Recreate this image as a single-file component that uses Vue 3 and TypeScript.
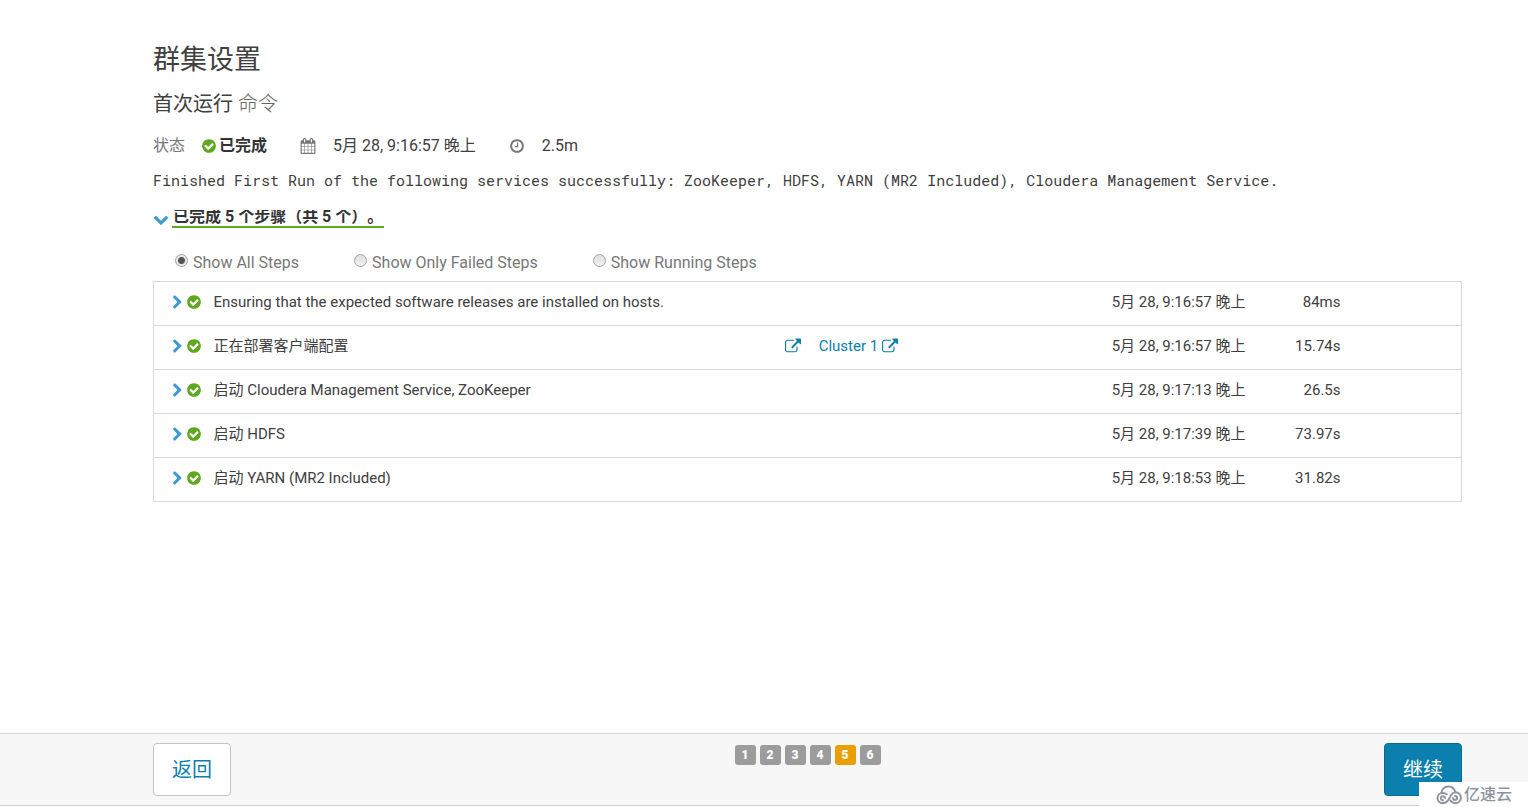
<script setup lang="ts">
import { ref } from 'vue'

interface Step {
  name: string
  cluster?: string
  started: string
  duration: string
}

const icons = {
  check: 'M1412 734q0-28-18-46l-91-90q-19-19-45-19t-45 19l-408 407-226-226q-19-19-45-19t-45 19l-91 90q-18 18-18 46 0 27 18 45l362 362q19 19 45 19 27 0 46-19l543-543q18-18 18-45zm252 162q0 209-103 385.5t-279.5 279.5-385.5 103-385.5-103-279.5-279.5-103-385.5 103-385.5 279.5-279.5 385.5-103 385.5 103 279.5 279.5 103 385.5z',
  external: 'M1472 992v320q0 119-84.5 203.5t-203.5 84.5h-832q-119 0-203.5-84.5t-84.5-203.5v-832q0-119 84.5-203.5t203.5-84.5h704q14 0 23 9t9 23v64q0 14-9 23t-23 9h-704q-66 0-113 47t-47 113v832q0 66 47 113t113 47h832q66 0 113-47t47-113v-320q0-14 9-23t23-9h64q14 0 23 9t9 23zm384-864v512q0 26-19 45t-45 19-45-19l-176-176-652 652q-10 10-23 10t-23-10l-114-114q-10-10-10-23t10-23l652-652-176-176q-19-19-19-45t19-45 45-19h512q26 0 45 19t19 45z',
  right: 'M1363 877l-742 742q-19 19-45 19t-45-19l-166-166q-19-19-19-45t19-45l531-531-531-531q-19-19-19-45t19-45l166-166q19-19 45-19t45 19l742 742q19 19 19 45t-19 45z',
  down: 'M1683 808l-742 741q-19 19-45 19t-45-19l-742-741q-19-19-19-45.5t19-45.5l166-165q19-19 45-19t45 19l531 531 531-531q19-19 45-19t45 19l166 165q19 19 19 45.5t-19 45.5z',
  clock: 'M1024 544v448q0 14-9 23t-23 9h-320q-14 0-23-9t-9-23v-64q0-14 9-23t23-9h224v-352q0-14 9-23t23-9h64q14 0 23 9t9 23zm416 352q0-148-73-273t-198-198-273-73-273 73-198 198-73 273 73 273 198 198 273 73 273-73 198-198 73-273zm224 0q0 209-103 385.5t-279.5 279.5-385.5 103-385.5-103-279.5-279.5-103-385.5 103-385.5 279.5-279.5 385.5-103 385.5 103 279.5 279.5 103 385.5z',
  calendar: 'M192 1664h288v-288h-288v288zm352 0h320v-288h-320v288zm-352-352h288v-320h-288v320zm352 0h320v-320h-320v320zm-352-384h288v-288h-288v288zm736 736h320v-288h-320v288zm-384-736h320v-288h-320v288zm768 736h288v-288h-288v288zm-384-352h320v-320h-320v320zm-352-864v-288q0-13-9.5-22.5t-22.5-9.5h-64q-13 0-22.5 9.5t-9.5 22.5v288q0 13 9.5 22.5t22.5 9.5h64q13 0 22.5-9.5t9.5-22.5zm736 864h288v-320h-288v320zm-384-384h320v-288h-320v288zm384 0h288v-288h-288v288zm32-480v-288q0-13-9.5-22.5t-22.5-9.5h-64q-13 0-22.5 9.5t-9.5 22.5v288q0 13 9.5 22.5t22.5 9.5h64q13 0 22.5-9.5t9.5-22.5zm384-64v1280q0 52-38 90t-90 38h-1408q-52 0-90-38t-38-90v-1280q0-52 38-90t90-38h128v-96q0-66 47-113t113-47h64q66 0 113 47t47 113v96h384v-96q0-66 47-113t113-47h64q66 0 113 47t47 113v96h128q52 0 90 38t38 90z',
}

const filters = [
  { value: 'all', label: 'Show All Steps' },
  { value: 'failed', label: 'Show Only Failed Steps' },
  { value: 'running', label: 'Show Running Steps' },
]
const filter = ref('all')

const steps: Step[] = [
  { name: 'Ensuring that the expected software releases are installed on hosts.', started: '5月 28, 9:16:57 晚上', duration: '84ms' },
  { name: '正在部署客户端配置', cluster: 'Cluster 1', started: '5月 28, 9:16:57 晚上', duration: '15.74s' },
  { name: '启动 Cloudera Management Service, ZooKeeper', started: '5月 28, 9:17:13 晚上', duration: '26.5s' },
  { name: '启动 HDFS', started: '5月 28, 9:17:39 晚上', duration: '73.97s' },
  { name: '启动 YARN (MR2 Included)', started: '5月 28, 9:18:53 晚上', duration: '31.82s' },
]

const pages = [1, 2, 3, 4, 5, 6]
const currentPage = 5
</script>

<template>
  <div class="page">
    <main class="content">
      <h1>群集设置</h1>
      <h2>首次运行 <small>命令</small></h2>

      <div class="status">
        <span class="muted">状态</span>
        <span class="done">
          <svg class="icon green" viewBox="0 0 1792 1792"><path :d="icons.check" /></svg>
          <strong>已完成</strong>
        </span>
        <span class="fact">
          <svg class="icon" viewBox="0 0 1792 1792"><path :d="icons.calendar" /></svg>
          <span>5月 28, 9:16:57 晚上</span>
        </span>
        <span class="fact">
          <svg class="icon" viewBox="0 0 1792 1792"><path :d="icons.clock" /></svg>
          <span>2.5m</span>
        </span>
      </div>

      <p class="message">Finished First Run of the following services successfully: ZooKeeper, HDFS, YARN (MR2 Included), Cloudera Management Service.</p>

      <button type="button" class="summary">
        <svg class="icon blue" viewBox="0 0 1792 1792"><path :d="icons.down" /></svg>
        <span>已完成 5 个步骤（共 5 个）。</span>
      </button>

      <div class="filters">
        <label v-for="f in filters" :key="f.value">
          <input v-model="filter" type="radio" name="filter" :value="f.value" />
          <span>{{ f.label }}</span>
        </label>
      </div>

      <table class="steps">
        <colgroup>
          <col class="c-icons" />
          <col class="c-name" />
          <col class="c-link" />
          <col class="c-date" />
          <col class="c-duration" />
          <col class="c-tail" />
        </colgroup>
        <tbody>
          <tr v-for="s in steps" :key="s.name">
            <td>
              <div class="marks">
                <button type="button" class="toggle" :aria-label="s.name">
                  <svg class="icon blue" viewBox="0 0 1792 1792"><path :d="icons.right" /></svg>
                </button>
                <svg class="icon green" viewBox="0 0 1792 1792"><path :d="icons.check" /></svg>
              </div>
            </td>
            <td>{{ s.name }}</td>
            <td>
              <div v-if="s.cluster" class="links">
                <a href="#" aria-label="Command details">
                  <svg class="icon" viewBox="64 0 1792 1792"><path :d="icons.external" /></svg>
                </a>
                <a href="#">
                  <span>{{ s.cluster }}</span>
                  <svg class="icon" viewBox="64 0 1792 1792"><path :d="icons.external" /></svg>
                </a>
              </div>
            </td>
            <td>{{ s.started }}</td>
            <td class="duration">{{ s.duration }}</td>
            <td></td>
          </tr>
        </tbody>
      </table>
    </main>

    <footer class="bar">
      <button type="button" class="btn back">返回</button>
      <ol class="pager">
        <li v-for="p in pages" :key="p" :class="{ active: p === currentPage }">{{ p }}</li>
      </ol>
      <button type="button" class="btn next">继续</button>
    </footer>

    <div class="watermark">
      <svg viewBox="0 0 26 20" fill="none" stroke="#8e959f" stroke-width="2" stroke-linecap="round">
        <path d="M5.500 8.200C5.500 4.300 8.500 1.500 12.300 1.500c3.500 0 6 2 6.900 5.300" />
        <path d="M10.800 9.300C9.700 8.400 8.400 8 6.600 8a5 5 0 0 0 0 10.200c3.700 0 5.400-2.200 6.900-5.200 1.400-2.900 2.700-5.700 6-5.700a5.400 5.400 0 0 1 0 10.900c-2.600 0-4-1.200-5-2.700" />
        <path d="M7 15.200a2 2 0 1 1 2-2.200M19 10.900a2 2 0 1 1-1.900 2.200" />
      </svg>
      <span>亿速云</span>
    </div>
  </div>
</template>

<style>
body {
  margin: 0;
  background: #fff;
}
</style>

<style scoped>
.page {
  position: relative;
  box-sizing: border-box;
  min-height: 100vh;
  padding-bottom: 1px;
  display: flex;
  flex-direction: column;
  font-family: Roboto, "Noto Sans CJK SC", sans-serif;
  font-size: 15px;
  line-height: 20px;
  color: #404040;
}

.content {
  flex: 1;
  padding: 42px 66px 24px 153px;
}

h1,
h2 {
  margin: 0;
  font-weight: 400;
}

h1 {
  font-size: 27px;
  line-height: 36px;
}

h2 {
  margin-top: 12px;
  font-size: 20px;
  line-height: 28px;
}

small {
  font-size: 20px;
  font-weight: 300;
  color: #666;
}

.muted {
  color: #777;
}

.icon {
  flex: none;
  width: 16px;
  height: 16px;
  fill: currentColor;
}

.green {
  color: #60a820;
}

.blue {
  color: #3a9bd0;
}

.status {
  display: flex;
  align-items: center;
  gap: 33px;
  margin-top: 16px;
  font-size: 16px;
  line-height: 24px;
}

.done {
  display: flex;
  align-items: center;
  gap: 2px;
  margin-left: -17px;
}

.done strong {
  color: #333;
}

.fact {
  display: flex;
  align-items: center;
  gap: 17px;
}

.fact .icon {
  color: #777;
}

.message {
  margin: 12px 0 0;
  font-family: "Roboto Mono", "Liberation Mono", monospace;
  font-size: 15px;
  line-height: 20px;
}

.summary {
  display: flex;
  align-items: center;
  gap: 3px;
  margin-top: 20px;
  padding: 0;
  border: 0;
  background: none;
  font-family: inherit;
  font-size: 16px;
  font-weight: 700;
  text-spacing-trim: space-all;
  color: #333;
}

.summary span {
  height: 16px;
  padding: 0 1px;
  border-bottom: 2px solid #60a820;
  line-height: 14px;
  overflow: hidden;
}

.filters {
  display: flex;
  gap: 55px;
  margin-top: 25px;
  padding-left: 22px;
  font-size: 16px;
  line-height: 20px;
  color: #777;
}

.filters label {
  display: flex;
  align-items: flex-start;
  gap: 5px;
}

.filters input {
  appearance: none;
  box-sizing: border-box;
  width: 13px;
  height: 13px;
  margin: 1px 0 0;
  border: 1px solid #a5a5a5;
  border-radius: 50%;
  background: linear-gradient(#dcdcdc, #f3f3f3);
}

.filters input:checked {
  background: radial-gradient(circle, #555 0 3px, #e8e8e8 4px);
}

.steps {
  width: 100%;
  margin-top: 8px;
  border: 1px solid #d8d8d8;
  border-collapse: collapse;
  table-layout: fixed;
}

.steps td {
  height: 44px;
  padding: 0 0 3px;
  border-bottom: 1px solid #d8d8d8;
  box-sizing: border-box;
  vertical-align: middle;
  white-space: nowrap;
}

.c-icons {
  width: 60px;
}

.c-link {
  width: 25%;
}

.c-date {
  width: 11%;
}

.c-duration {
  width: 6.5%;
}

.c-tail {
  width: 9.25%;
}

.marks {
  display: flex;
  align-items: center;
  gap: 1px;
  padding-left: 16px;
}

.toggle {
  display: flex;
  padding: 0;
  border: 0;
  background: none;
}

.toggle .icon {
  width: 15px;
  height: 15px;
}

.links,
.links a {
  display: flex;
  align-items: center;
}

.links {
  gap: 18px;
}

.links a {
  gap: 4px;
  color: #0b7fad;
  text-decoration: none;
}

.steps .duration {
  text-align: right;
}

.bar {
  display: grid;
  grid-template-columns: 1fr auto 1fr;
  align-items: start;
  padding: 9px 66px 9px 153px;
  border-top: 1px solid #d8d8d8;
  border-bottom: 1px solid #d0d0d0;
  background: #f7f7f7;
}

.btn {
  padding: 12px 18px 10px;
  border: 1px solid #c4c4c4;
  border-radius: 4px;
  font-family: inherit;
  font-size: 20px;
  line-height: 29px;
}

.back {
  justify-self: start;
  background: #fff;
  color: #0b7fad;
}

.next {
  justify-self: end;
  border-color: #0a6a94;
  background: #0b7fad;
  color: #fff;
}

.pager {
  display: flex;
  gap: 4px;
  margin: 2px 0 0;
  padding: 0;
  list-style: none;
  font-size: 12px;
  font-weight: 900;
  line-height: 20px;
  text-align: center;
  color: #fff;
}

.pager li {
  width: 21px;
  border-radius: 3px;
  background: #9c9c9c;
}

.pager .active {
  background: #e99f00;
}

.watermark {
  position: absolute;
  right: 0;
  bottom: 0;
  display: flex;
  align-items: center;
  gap: 2px;
  box-sizing: border-box;
  height: 25px;
  padding: 0 16px 0 17px;
  background: #fff;
  font-size: 16px;
  font-weight: 500;
  line-height: 24px;
  color: #8e959f;
}

.watermark svg {
  width: 26px;
  height: 20px;
}
</style>
